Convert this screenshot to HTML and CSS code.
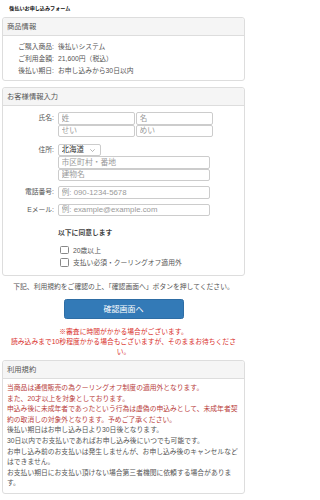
FILE: index.html
```html
<!DOCTYPE html>
<html lang="ja">
<head>
<meta charset="utf-8">
<meta name="viewport" content="width=247">
<title>後払いお申し込みフォーム</title>
<link rel="stylesheet" href="styles.css">
</head>
<body>
<div class="page">
  <h1 class="title">後払いお申し込みフォーム</h1>

  <section class="panel">
    <div class="panel-heading">商品情報</div>
    <div class="panel-body product">
      <div class="kv"><span class="k">ご購入商品:</span><span class="v">後払いシステム</span></div>
      <div class="kv"><span class="k">ご利用金額:</span><span class="v">21,600円（税込）</span></div>
      <div class="kv"><span class="k">後払い期日:</span><span class="v">お申し込みから30日以内</span></div>
    </div>
  </section>

  <section class="panel">
    <div class="panel-heading">お客様情報入力</div>
    <div class="panel-body form">
      <div class="fields">
        <div class="row name-row">
          <label class="k">氏名:</label>
          <div class="name-grid">
            <input class="input" type="text" placeholder="姓">
            <input class="input" type="text" placeholder="名">
            <input class="input" type="text" placeholder="せい">
            <input class="input" type="text" placeholder="めい">
          </div>
        </div>
        <div class="row">
          <label class="k">住所:</label>
          <div class="stack">
            <span class="select-wrap">
              <select class="select"><option>北海道</option></select>
              <svg class="chev" width="5" height="3" viewBox="0 0 5 3"><polyline points="0.3,0.3 2.5,2.5 4.7,0.3" fill="none" stroke="#888" stroke-width="0.6"/></svg>
            </span>
            <input class="input wide" type="text" placeholder="市区町村・番地">
            <input class="input wide" type="text" placeholder="建物名">
          </div>
        </div>
        <div class="row">
          <label class="k">電話番号:</label>
          <input class="input wide" type="text" placeholder="例: 090-1234-5678">
        </div>
        <div class="row">
          <label class="k">Eメール:</label>
          <input class="input wide" type="text" placeholder="例: example@example.com">
        </div>
      </div>

      <div class="agree">
        <div class="agree-title">以下に同意します</div>
        <label class="check"><input type="checkbox" class="box"><span>20歳以上</span></label>
        <label class="check"><input type="checkbox" class="box"><span>支払い必須・クーリングオフ適用外</span></label>
      </div>
    </div>
  </section>

  <p class="instruction">下記、利用規約をご確認の上、「確認画面へ」ボタンを押してください。</p>
  <button class="btn" type="button">確認画面へ</button>
  <p class="notice">※審査に時間がかかる場合がございます。<br>読み込みまで10秒程度かかる場合もございますが、そのままお待ちください。</p>

  <section class="panel terms">
    <div class="panel-heading">利用規約</div>
    <div class="panel-body terms-body">
      <p class="red">当商品は通信販売の為クーリングオフ制度の適用外となります。</p>
      <p class="red">また、20才以上を対象としております。</p>
      <p class="red">申込み後に未成年者であったという行為は虚偽の申込みとして、未成年者契約の取消しの対象外となります。予めご了承ください。</p>
      <p>後払い期日はお申し込み日より30日後となります。</p>
      <p>30日以内でお支払いであればお申し込み後にいつでも可能です。</p>
      <p>お申し込み前のお支払いは発生しませんが、お申し込み後のキャンセルなどはできません。</p>
      <p>お支払い期日にお支払い頂けない場合第三者機関に依頼する場合があります。</p>
    </div>
  </section>
</div>
</body>
</html>
```
FILE: styles.css
```css
* { box-sizing: border-box; }

body {
  margin: 0;
  background: #fff;
  color: #555;
  font-family: "Liberation Sans", "Noto Sans CJK JP", sans-serif;
  font-size: 6.8px;
}

.page {
  width: 247px;
  padding: 5px 2px 0;
}

.title {
  margin: 0 0 5px 7.3px;
  font-size: 5.1px;
  line-height: 7px;
  font-weight: bold;
  color: #111;
}

.panel {
  border: 1px solid #ddd;
  border-radius: 3px;
  margin-bottom: 6px;
  background: #fff;
}

.panel-heading {
  background: #f5f5f5;
  border-bottom: 1px solid #ddd;
  border-radius: 3px 3px 0 0;
  padding: 3.5px 4px;
  font-size: 7.3px;
  line-height: 10px;
  color: #555;
}

.panel-body {
  padding: 4px;
}

.product {
  padding: 5px 4px 3px;
}

.kv {
  display: grid;
  grid-template-columns: 47px 1fr;
  column-gap: 4px;
  line-height: 12px;
}

.k {
  text-align: right;
  white-space: nowrap;
}

.form {
  padding: 6px 4px 6px;
}

.fields {
  display: flex;
  flex-direction: column;
  gap: 5px;
}

.row {
  display: grid;
  grid-template-columns: 47px 1fr;
  column-gap: 4px;
  align-items: start;
}

.row .k {
  line-height: 12.5px;
}

.name-row {
  margin-bottom: 1.5px;
}

.name-grid {
  display: grid;
  grid-template-columns: 77px 77px;
  column-gap: 1px;
}

.stack {
  display: flex;
  flex-direction: column;
  align-items: flex-start;
}

.input {
  display: block;
  height: 12.5px;
  margin: 0;
  padding: 0 2.5px;
  border: 1px solid #ccc;
  border-radius: 2px;
  background: #fff;
  font-family: "Liberation Sans", "Noto Sans CJK JP", sans-serif;
  font-size: 7.8px;
  color: #333;
  outline: none;
}

.input::placeholder {
  color: #9a9a9a;
}

.wide {
  width: 151.5px;
}

.select-wrap {
  position: relative;
  display: block;
  width: 43px;
  height: 12.5px;
}

.select {
  display: block;
  width: 43px;
  height: 12.5px;
  margin: 0;
  padding: 0 2.5px;
  border: 1px solid #ccc;
  border-radius: 2px;
  background: #fff;
  font-family: "Liberation Sans", "Noto Sans CJK JP", sans-serif;
  font-size: 7.5px;
  color: #333;
  -webkit-appearance: none;
  appearance: none;
  outline: none;
}

.chev {
  position: absolute;
  right: 6px;
  top: 5px;
}

.agree {
  margin: 12px 0 0 51px;
}

.agree-title {
  font-weight: bold;
  line-height: 10px;
  color: #444;
  margin-bottom: 5.5px;
}

.check {
  display: flex;
  align-items: center;
  height: 12.5px;
  padding-left: 2px;
}

.box {
  -webkit-appearance: none;
  appearance: none;
  width: 8.5px;
  height: 8.5px;
  margin: 0 4.5px 0 0;
  border: 1px solid #888;
  border-radius: 1.5px;
  background: #fff;
}

.instruction {
  margin: 4.5px 0 0;
  padding: 0 8px;
  text-align: center;
  line-height: 10px;
  color: #555;
}

.btn {
  display: block;
  width: 120px;
  height: 20px;
  margin: 7px auto 0;
  padding: 0;
  border: 1px solid #2e6da4;
  border-radius: 2.5px;
  background: #337ab7;
  color: #fff;
  font-family: "Liberation Sans", "Noto Sans CJK JP", sans-serif;
  font-size: 8px;
}

.notice {
  margin: 8.5px 0 3px;
  padding: 0 8px;
  text-align: center;
  line-height: 10px;
  color: #d9302c;
}

.terms-body {
  padding: 4px;
}

.terms-body p {
  margin: 0;
  line-height: 10.6px;
  color: #555;
}

.terms-body p.red {
  color: #b9403c;
}
```
